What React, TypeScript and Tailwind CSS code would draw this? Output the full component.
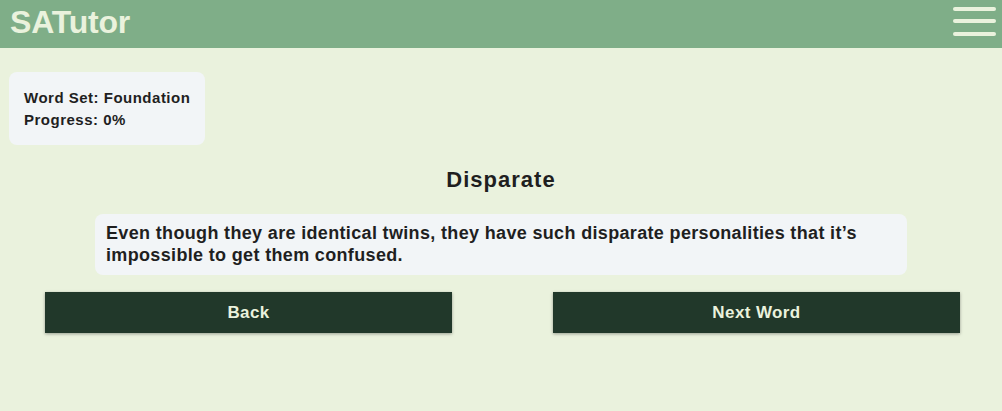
import React from "react";

export default function App() {
  return (
    <div className="w-[1002px] h-[411px] bg-[#eaf2dd] text-[#1f1f1f] overflow-hidden" style={{ fontFamily: '"Liberation Sans", Arial, sans-serif' }}>
      <header className="h-[48px] bg-[#7fae88] flex items-center justify-between pl-[10px] pr-[6px]">
        <h1 className="text-[32px] font-bold leading-none text-[#eaf2dd] tracking-[-0.2px] -mt-[4px]">SATutor</h1>
        <button className="flex flex-col gap-[8.5px] -mt-[6px]" aria-label="menu">
          <span className="block w-[43px] h-[4px] rounded-full bg-[#eaf2dd]" />
          <span className="block w-[43px] h-[4px] rounded-full bg-[#eaf2dd]" />
          <span className="block w-[43px] h-[4px] rounded-full bg-[#eaf2dd]" />
        </button>
      </header>
      <div className="pt-[24px] pl-[9px]">
        <div className="w-[196px] h-[73px] bg-[#f2f5f7] rounded-[8px] pl-[15px] pt-[15px] text-[15px] font-bold leading-[22px] tracking-[0.5px]">
          <div>Word Set: Foundation</div>
          <div>Progress: 0%</div>
        </div>
      </div>
      <h2 className="text-center text-[22px] font-bold mt-[22px] leading-[26px] tracking-[1px]">Disparate</h2>
      <div className="mx-auto mt-[21px] w-[812px] h-[61px] bg-[#f2f5f7] rounded-[8px] pl-[11px] pt-[8px] text-[18px] font-bold leading-[22px] tracking-[0.34px]">
        Even though they are identical twins, they have such disparate personalities that it’s impossible to get them confused.
      </div>
      <div className="flex pl-[45px] gap-[101px] mt-[17px]">
        <button className="w-[407px] h-[41px] bg-[#21382a] text-[#eaf2dd] text-[17px] font-bold tracking-[0.4px] shadow-[0_1px_3px_rgba(0,0,0,0.35)]">Back</button>
        <button className="w-[407px] h-[41px] bg-[#21382a] text-[#eaf2dd] text-[17px] font-bold tracking-[0.4px] shadow-[0_1px_3px_rgba(0,0,0,0.35)]">Next Word</button>
      </div>
    </div>
  );
}
